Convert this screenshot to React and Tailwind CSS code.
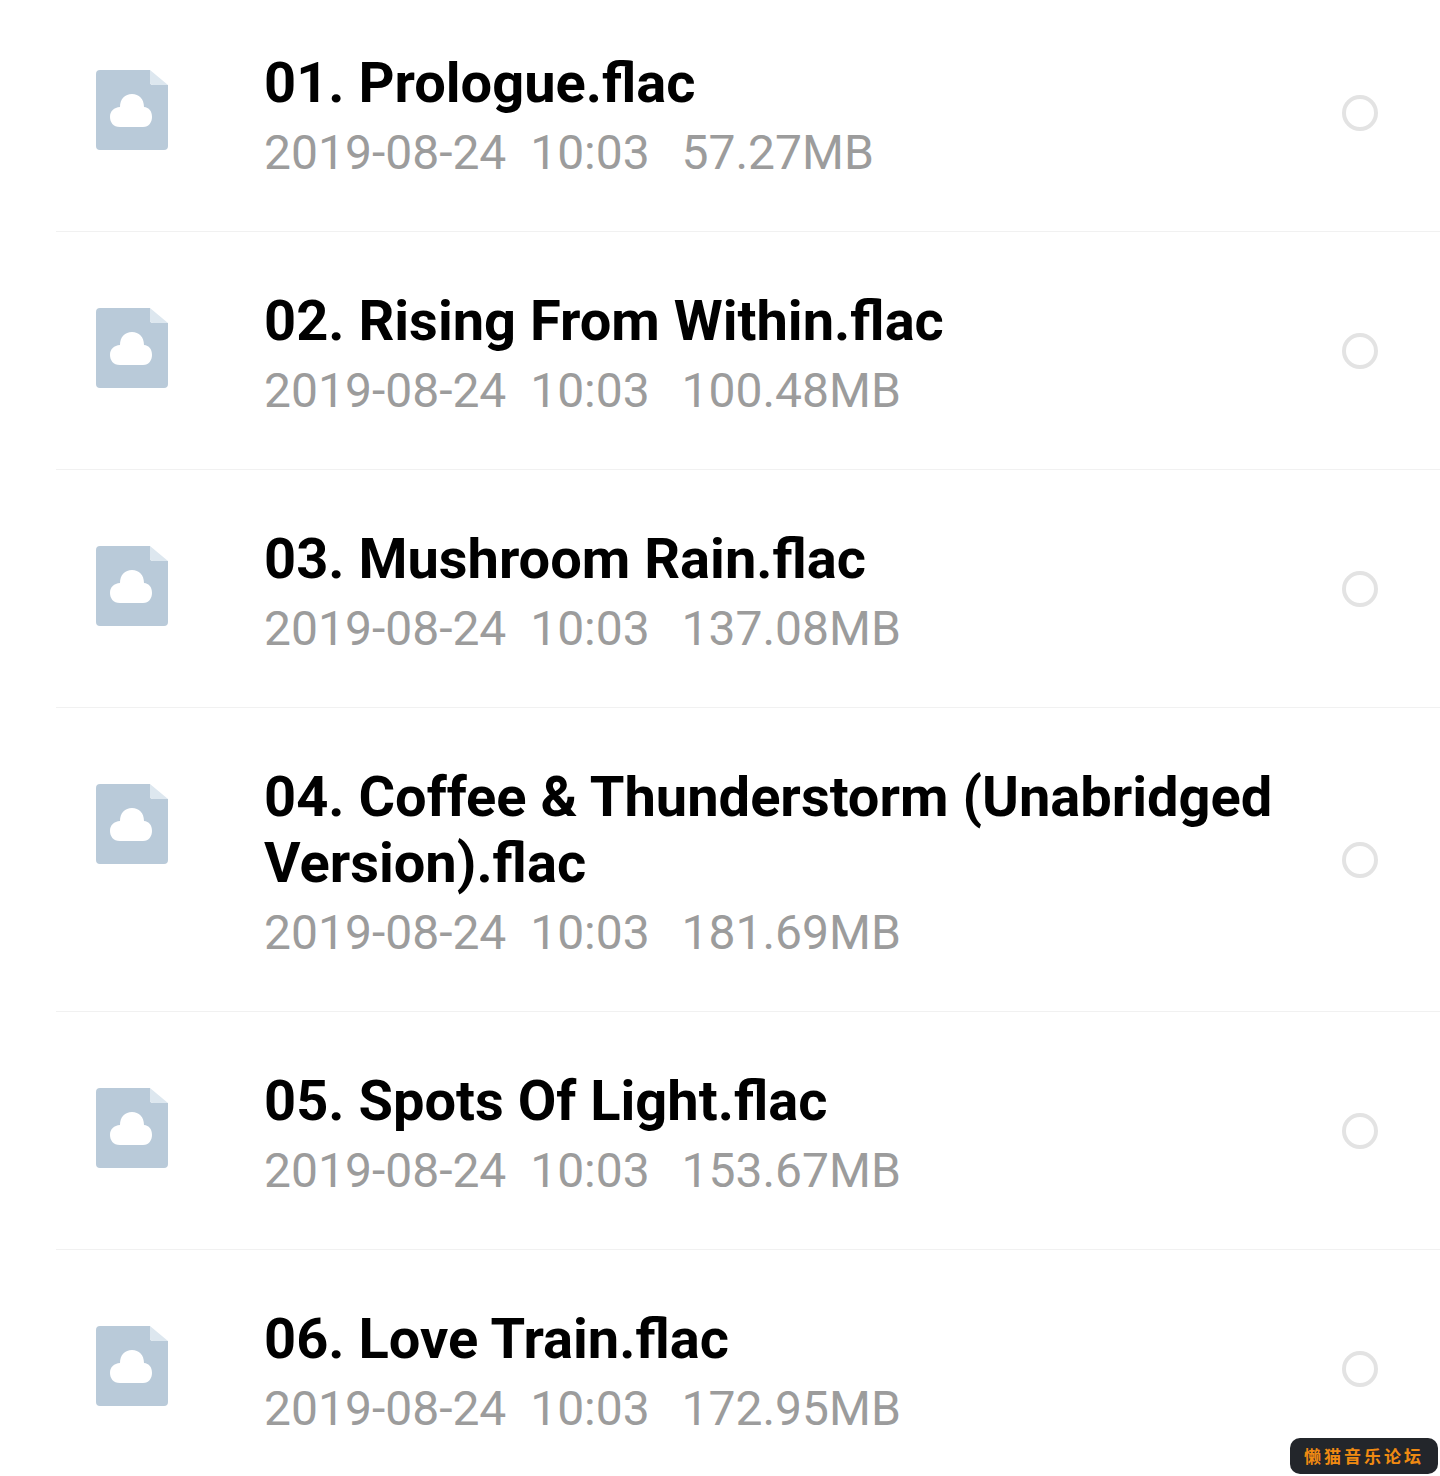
import React from 'react';

const files = [
  { name: '01. Prologue.flac', size: '57.27MB' },
  { name: '02. Rising From Within.flac', size: '100.48MB' },
  { name: '03. Mushroom Rain.flac', size: '137.08MB' },
  { name: '04. Coffee & Thunderstorm (Unabridged Version).flac', size: '181.69MB' },
  { name: '05. Spots Of Light.flac', size: '153.67MB' },
  { name: '06. Love Train.flac', size: '172.95MB' },
];

function CloudFile() {
  return (
    <svg width="72" height="80" viewBox="0 0 72 80" className="block">
      <path d="M4 0H54V12Q54 15 57 15H72V76Q72 80 68 80H4Q0 80 0 76V4Q0 0 4 0Z" fill="#b9cad9" />
      <path d="M54 0L72 15H57Q54 15 54 12Z" fill="#dde7ef" />
      <path
        d="M24 57C17 57 14 52 14 47C14 41 18 37.500 24 37C24 29 29 24 36 24C43 24 48 29 48 37C53 37.500 56 41 56 47C56 52 53 57 47 57Z"
        fill="#ffffff"
      />
    </svg>
  );
}

function FileRow({ file }) {
  return (
    <div className="flex relative border-b border-[#f1f1f1] ml-[56px] pl-[40px] pt-[56px] pb-[50px]">
      <div className="w-[72px] shrink-0 mt-[20px]">
        <CloudFile />
      </div>
      <div className="ml-[96px] flex-1 pr-[150px]">
        <div className="text-[56px] leading-[66px] font-bold text-black">{file.name}</div>
        <div className="text-[48px] leading-[56px] mt-[9px] text-[#9c9c9c] whitespace-pre">
          {'2019-08-24  10:03  '}
          <span className="ml-[8px]">{file.size}</span>
        </div>
      </div>
      <div className="absolute right-[62px] top-1/2 -translate-y-1/2 w-[36px] h-[36px] rounded-full border-[4px] border-[#e3e3e3]" />
    </div>
  );
}

export default function App() {
  return (
    <div className="relative h-[1476px] overflow-hidden bg-white font-['Roboto',sans-serif]">
      <div className="-mt-[6px]">
        {files.map((f) => (
          <FileRow key={f.name} file={f} />
        ))}
      </div>
      <div className="absolute left-[1290px] top-[1438px] w-[148px] h-[36px] rounded-[10px] bg-[#23262b] flex items-center justify-center text-[17px] font-bold tracking-[3px] text-[#f08a12] font-['Noto_Sans_CJK_SC',sans-serif]">
        懒猫音乐论坛
      </div>
    </div>
  );
}
